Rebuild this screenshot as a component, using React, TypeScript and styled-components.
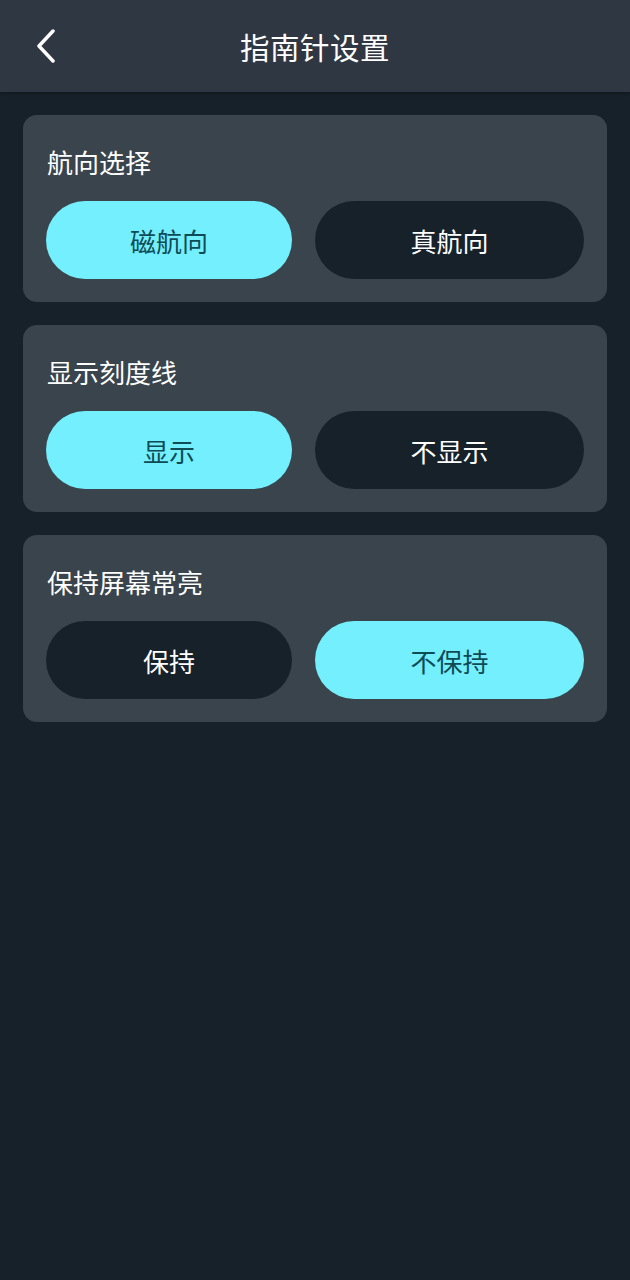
import React, { useState } from "react";
import styled, { createGlobalStyle } from "styled-components";

const Global = createGlobalStyle`
  html, body { margin: 0; padding: 0; background: #17212a; }
  body { font-family: "Noto Sans CJK SC", "Noto Sans", sans-serif; }
`;

const Page = styled.div`
  width: 630px;
  min-height: 1280px;
  background: #17212a;
  display: flex;
  flex-direction: column;
`;

const Header = styled.header`
  height: 92px;
  background: #2e3742;
  position: relative;
  display: flex;
  align-items: center;
  justify-content: center;
  box-shadow: 0 1px 3px rgba(0,0,0,0.4);
`;

const BackButton = styled.button`
  position: absolute;
  left: 26px;
  top: 24px;
  width: 40px;
  height: 44px;
  background: none;
  border: none;
  padding: 0;
  display: flex;
  align-items: center;
  justify-content: center;
`;

const Title = styled.h1`
  margin: 0;
  font-size: 29.5px;
  font-weight: 400;
  color: #ffffff;
  letter-spacing: 0.5px;
`;

const Content = styled.main`
  padding: 23px 23px;
  display: flex;
  flex-direction: column;
  gap: 23px;
`;

const Card = styled.section`
  background: #3a444c;
  border-radius: 14px;
  padding: 23px 23px 23px;
  display: flex;
  flex-direction: column;
`;

const CardTitle = styled.div`
  font-size: 26px;
  color: #ffffff;
  line-height: 48px;
  margin-bottom: 15px;
  padding-left: 1px;
`;

const Options = styled.div`
  display: grid;
  grid-template-columns: 246fr 269fr;
  gap: 23px;
`;

const Option = styled.button<{ $active: boolean }>`
  height: 78px;
  border: none;
  border-radius: 39px;
  background: ${(p) => (p.$active ? "#74effd" : "#17212a")};
  color: ${(p) => (p.$active ? "#0f4b55" : "#ffffff")};
  font-family: "Noto Sans CJK SC", "Noto Sans", sans-serif;
  font-size: 26px;
  cursor: pointer;
  padding: 0;
`;

const groups = [
  { title: "航向选择", options: ["磁航向", "真航向"], initial: 0 },
  { title: "显示刻度线", options: ["显示", "不显示"], initial: 0 },
  { title: "保持屏幕常亮", options: ["保持", "不保持"], initial: 1 },
];

function Group({ title, options, initial }: { title: string; options: string[]; initial: number }) {
  const [sel, setSel] = useState(initial);
  return (
    <Card>
      <CardTitle>{title}</CardTitle>
      <Options>
        {options.map((o, i) => (
          <Option key={o} $active={sel === i} onClick={() => setSel(i)}>
            {o}
          </Option>
        ))}
      </Options>
    </Card>
  );
}

export default function App() {
  return (
    <>
      <Global />
      <Page>
        <Header>
          <BackButton aria-label="back">
            <svg width="22" height="34" viewBox="0 0 22 34" fill="none">
              <path d="M18 2 L4 17 L18 32" stroke="#fff" strokeWidth="3.5" strokeLinecap="round" strokeLinejoin="round" />
            </svg>
          </BackButton>
          <Title>指南针设置</Title>
        </Header>
        <Content>
          {groups.map((g) => (
            <Group key={g.title} {...g} />
          ))}
        </Content>
      </Page>
    </>
  );
}
